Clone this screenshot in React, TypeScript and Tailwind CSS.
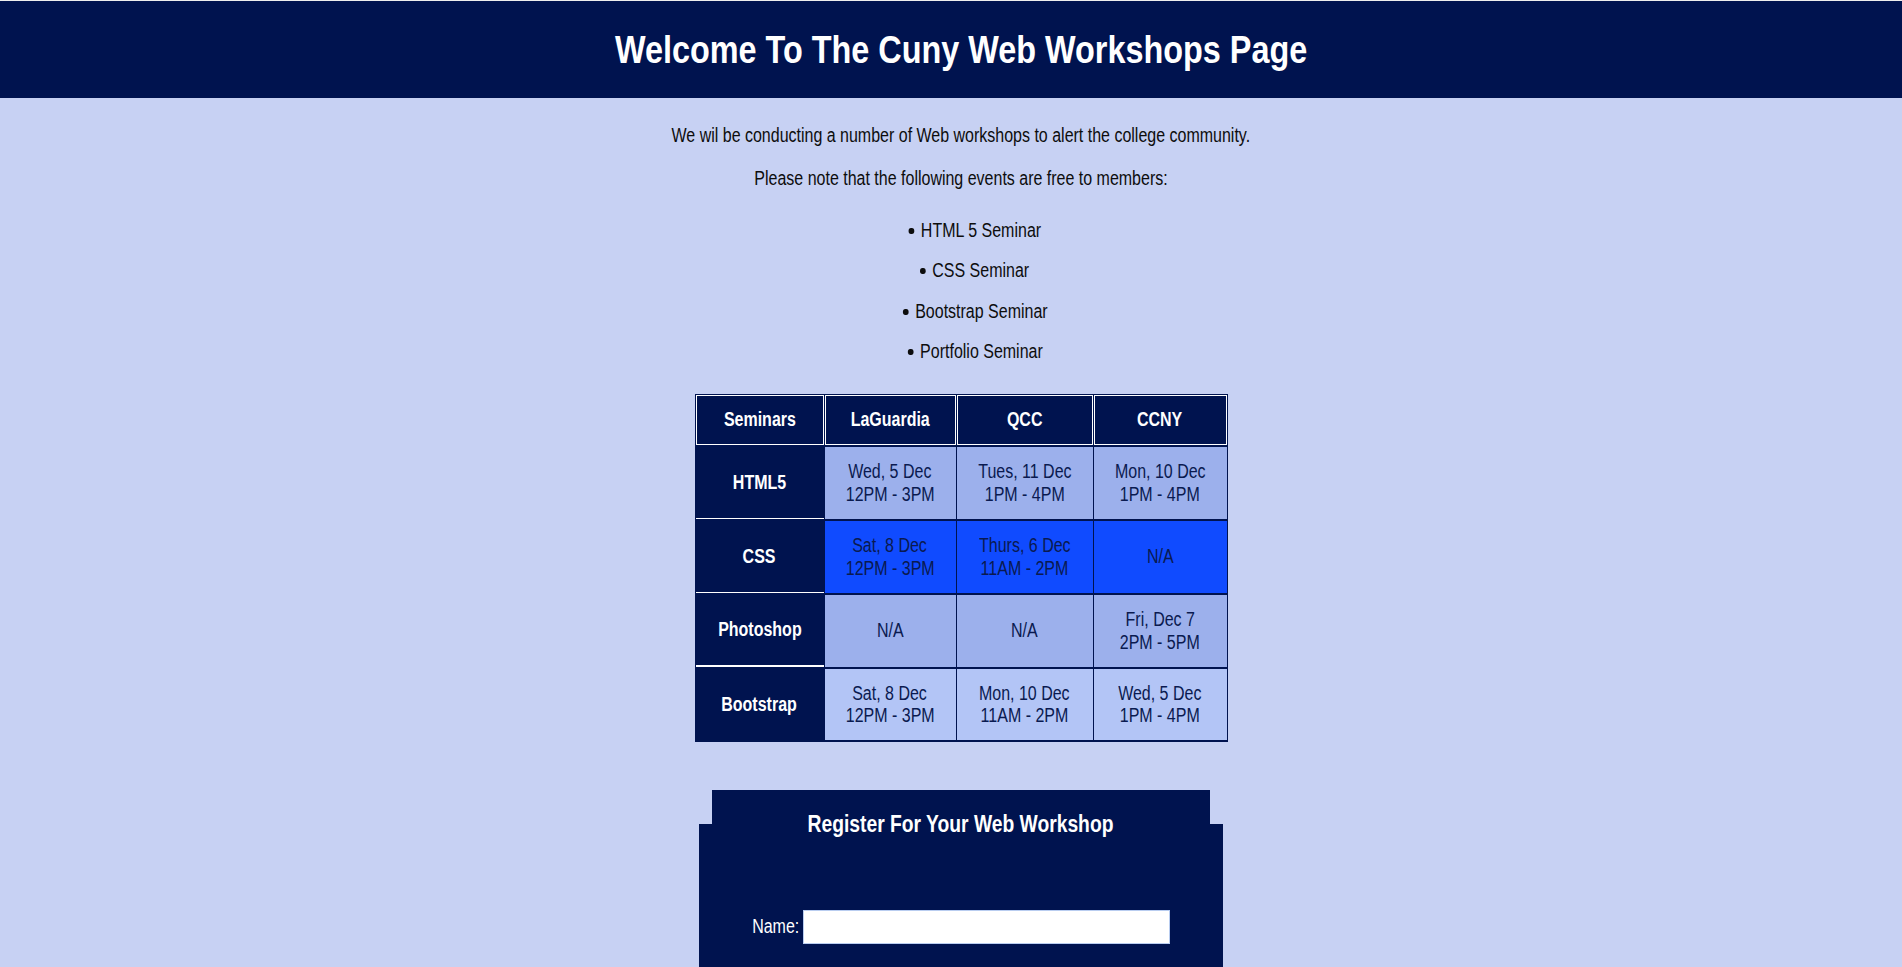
import React from "react";

const NAVY = "bg-[#00134f]";

type Row = { name: string; bg: string; border: string; cells: string[][] };

const rows: Row[] = [
  {
    name: "HTML5",
    bg: "bg-[#9cb0ec]",
    border: "border-b border-white",
    cells: [
      ["Wed, 5 Dec", "12PM - 3PM"],
      ["Tues, 11 Dec", "1PM - 4PM"],
      ["Mon, 10 Dec", "1PM - 4PM"],
    ],
  },
  {
    name: "CSS",
    bg: "bg-[#104bff]",
    border: "border-b border-white",
    cells: [
      ["Sat, 8 Dec", "12PM - 3PM"],
      ["Thurs, 6 Dec", "11AM - 2PM"],
      ["N/A"],
    ],
  },
  {
    name: "Photoshop",
    bg: "bg-[#9cb0ec]",
    border: "border-b-2 border-white",
    cells: [["N/A"], ["N/A"], ["Fri, Dec 7", "2PM - 5PM"]],
  },
  {
    name: "Bootstrap",
    bg: "bg-[#b3c5f6]",
    border: "",
    cells: [
      ["Sat, 8 Dec", "12PM - 3PM"],
      ["Mon, 10 Dec", "11AM - 2PM"],
      ["Wed, 5 Dec", "1PM - 4PM"],
    ],
  },
];

const headers = ["Seminars", "LaGuardia", "QCC", "CCNY"];
const items = ["HTML 5 Seminar", "CSS Seminar", "Bootstrap Seminar", "Portfolio Seminar"];

function N({ children, className = "" }: { children: React.ReactNode; className?: string }) {
  return <span className={`inline-block scale-x-[0.82] whitespace-nowrap ${className}`}>{children}</span>;
}

export default function App() {
  return (
    <div
      className="min-h-screen bg-[#c7d1f3] text-black"
      style={{ fontFamily: "'Liberation Sans Narrow', 'Arial Narrow', 'Liberation Sans', Arial, sans-serif" }}
    >
      <header className={`${NAVY} border-t border-[#eeeeee] h-[98px] flex items-center justify-center pl-[20px]`}>
        <h1 className="text-[39.5px] font-bold text-white leading-none">
          <N>Welcome To The Cuny Web Workshops Page</N>
        </h1>
      </header>

      <main className="pl-[20px] flex flex-col items-center text-[19.5px]">
        <p className="mt-[26px] leading-[22px] text-[#0d0d0d]">
          <N>We wil be conducting a number of Web workshops to alert the college community.</N>
        </p>
        <p className="mt-[21px] leading-[22px] text-[#0d0d0d]">
          <N>Please note that the following events are free to members:</N>
        </p>
        <ul className="mt-[21px] flex flex-col items-center pl-[28px] text-[#0d0d0d]">
          {items.map((it) => (
            <li key={it} className="leading-[40.4px]">
              <N>
                <span className="inline-block w-[7px] h-[6px] rounded-full bg-[#0d0d0d] align-middle mr-[8px] relative -top-px" />
                {it}
              </N>
            </li>
          ))}
        </ul>

        <div
          className={`mt-[22px] ${NAVY} pt-px px-px pb-[2px] grid grid-cols-[128px_131px_136px_133px] grid-rows-[50px_72px_72px_72px_71px] gap-x-px gap-y-[2px]`}
        >
          {headers.map((h) => (
            <div key={h} className="border border-white flex items-center justify-center text-white font-bold">
              <N>{h}</N>
            </div>
          ))}
          {rows.map((r) => (
            <React.Fragment key={r.name}>
              <div className={`flex items-center justify-center text-white font-bold ${r.border}`}>
                <N>{r.name}</N>
              </div>
              {r.cells.map((c, i) => (
                <div
                  key={i}
                  className={`${r.bg} flex flex-col items-center justify-center text-[#0a1a50] leading-[22.5px]`}
                >
                  {c.map((line) => (
                    <N key={line}>{line}</N>
                  ))}
                </div>
              ))}
            </React.Fragment>
          ))}
        </div>

        <form className="mt-[48px] w-[524px] flex flex-col" onSubmit={(e) => e.preventDefault()}>
          <div className={`${NAVY} mx-[13px] h-[34px] relative z-10`}>
            <h2 className="pt-[21px] leading-[27px] text-[23.5px] font-bold text-white text-center">
              <N>Register For Your Web Workshop</N>
            </h2>
          </div>
          <div className={`${NAVY} h-[320px] pt-[86px] flex flex-col items-center`}>
            <div className="flex items-center gap-[4px]">
              <label htmlFor="name" className="text-white w-[47px] flex justify-center">
                <N>Name:</N>
              </label>
              <input
                id="name"
                type="text"
                className="w-[367px] h-[34px] bg-white border border-[#b9cdf0] outline-none"
              />
            </div>
          </div>
        </form>
      </main>
    </div>
  );
}
